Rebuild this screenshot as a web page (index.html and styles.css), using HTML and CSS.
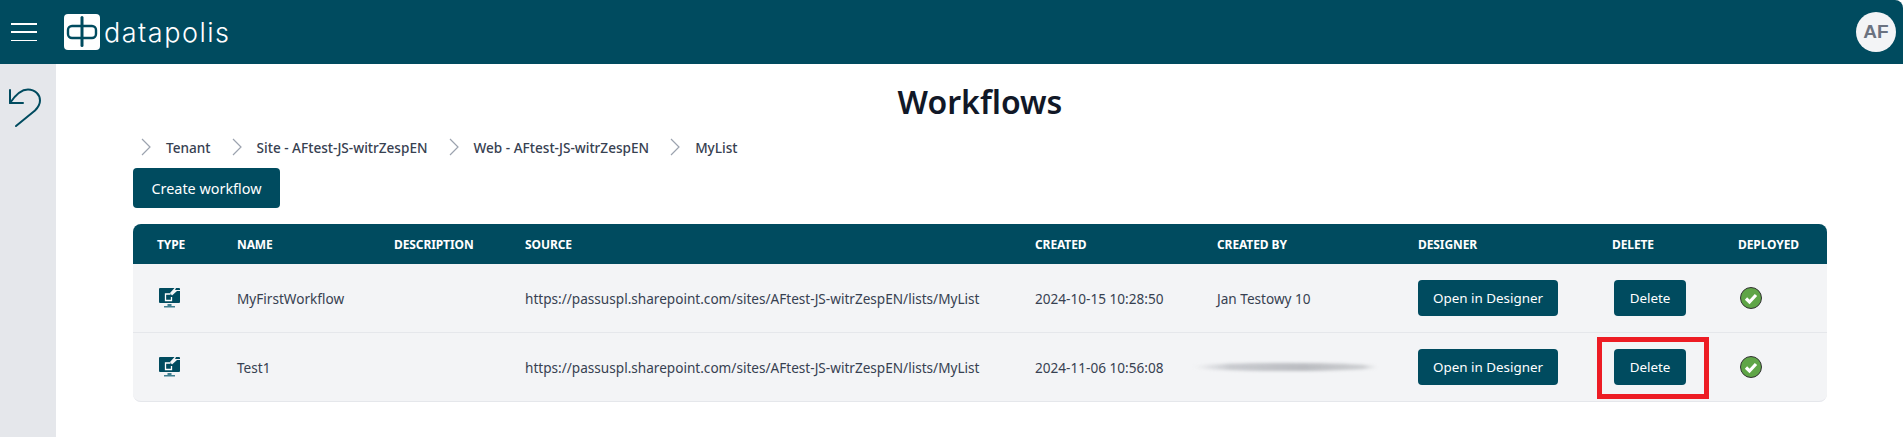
FILE: index.html
```html
<!DOCTYPE html>
<html lang="en">
<head>
    <meta charset="UTF-8">
    <title>Workflows</title>
    <link rel="stylesheet" href="styles.css">
</head>
<body>
    <header class="topbar">
        <div class="topbar-left">
            <button class="burger" aria-label="Menu"><span></span><span></span><span></span></button>
            <div class="logo">
                <svg class="logo-mark" width="36" height="36" viewBox="0 0 36 36">
                    <rect width="36" height="36" rx="4" fill="#fff"/>
                    <rect x="4" y="12" width="28" height="12" rx="4" fill="none" stroke="#004b5f" stroke-width="2.4"/>
                    <path d="M18 3.500v28" stroke="#004b5f" stroke-width="3" stroke-linecap="round"/>
                </svg>
                <span class="logo-text">datapolis</span>
            </div>
        </div>
        <div class="avatar">AF</div>
    </header>

    <div class="layout">
        <aside class="sidebar">
            <svg width="36" height="44" viewBox="0 0 36 44" fill="none" stroke="#004b5f" stroke-width="2" stroke-linecap="round" stroke-linejoin="round">
                <path d="M2 2v13h13"/>
                <path d="M2 15C8 6 13 1.500 20 1.500c7 0 12 5 12 11 0 4-2 7-5 10L8 38"/>
            </svg>
        </aside>

        <main class="content">
            <h1>Workflows</h1>

            <nav class="breadcrumb">
                <span class="crumb"><svg class="chevron" width="10" height="18" viewBox="0 0 10 18"><path d="M1 1l8 8-8 8" /></svg>Tenant</span>
                <span class="crumb"><svg class="chevron" width="10" height="18" viewBox="0 0 10 18"><path d="M1 1l8 8-8 8" /></svg>Site - AFtest-JS-witrZespEN</span>
                <span class="crumb"><svg class="chevron" width="10" height="18" viewBox="0 0 10 18"><path d="M1 1l8 8-8 8" /></svg>Web - AFtest-JS-witrZespEN</span>
                <span class="crumb"><svg class="chevron" width="10" height="18" viewBox="0 0 10 18"><path d="M1 1l8 8-8 8" /></svg>MyList</span>
            </nav>

            <button class="btn btn-create">Create workflow</button>

            <table class="workflows">
                <colgroup>
                    <col class="col-type"><col class="col-name"><col class="col-desc"><col class="col-source"><col class="col-created"><col class="col-by"><col class="col-designer"><col class="col-delete"><col class="col-deployed">
                </colgroup>
                <thead>
                    <tr>
                        <th>Type</th><th>Name</th><th>Description</th><th>Source</th><th>Created</th><th>Created by</th><th>Designer</th><th>Delete</th><th>Deployed</th>
                    </tr>
                </thead>
                <tbody>
                    <tr>
                        <td>
                            <svg class="type-icon" width="21" height="20" viewBox="0 0 21 20">
                                <path d="M1 0h14.500L11 5l2 2.500L18 3h3v11a1 1 0 0 1-1 1H1a1 1 0 0 1-1-1V1a1 1 0 0 1 1-1z" fill="#004b5f"/>
                                <path d="M17 0h3a1 1 0 0 1 1 1v1h-5z" fill="#004b5f"/>
                                <path d="M11.500 6h-5v6.500h6V9" fill="none" stroke="#fff" stroke-width="1.300"/>
                                <path d="M8.500 16h4v2h-4zM5 18h11v1.500H5z" fill="#3f7f90"/>
                            </svg>
                        </td>
                        <td>MyFirstWorkflow</td>
                        <td></td>
                        <td>https://passuspl.sharepoint.com/sites/AFtest-JS-witrZespEN/lists/MyList</td>
                        <td>2024-10-15 10:28:50</td>
                        <td>Jan Testowy 10</td>
                        <td><button class="btn btn-designer">Open in Designer</button></td>
                        <td><button class="btn btn-delete">Delete</button></td>
                        <td>
                            <svg class="ok-icon" width="22" height="22" viewBox="0 0 22 22">
                                <circle cx="11" cy="11" r="10.500" fill="#5fa547" stroke="#333" stroke-width="1"/>
                                <path d="M6 11.500l3.500 3.500L16 8" fill="none" stroke="#fff" stroke-width="3.200"/>
                            </svg>
                        </td>
                    </tr>
                    <tr>
                        <td>
                            <svg class="type-icon" width="21" height="20" viewBox="0 0 21 20">
                                <path d="M1 0h14.500L11 5l2 2.500L18 3h3v11a1 1 0 0 1-1 1H1a1 1 0 0 1-1-1V1a1 1 0 0 1 1-1z" fill="#004b5f"/>
                                <path d="M17 0h3a1 1 0 0 1 1 1v1h-5z" fill="#004b5f"/>
                                <path d="M11.500 6h-5v6.500h6V9" fill="none" stroke="#fff" stroke-width="1.300"/>
                                <path d="M8.500 16h4v2h-4zM5 18h11v1.500H5z" fill="#3f7f90"/>
                            </svg>
                        </td>
                        <td>Test1</td>
                        <td></td>
                        <td>https://passuspl.sharepoint.com/sites/AFtest-JS-witrZespEN/lists/MyList</td>
                        <td>2024-11-06 10:56:08</td>
                        <td><div class="smudge"></div></td>
                        <td><button class="btn btn-designer">Open in Designer</button></td>
                        <td>
                            <div class="highlight"><button class="btn btn-delete">Delete</button></div>
                        </td>
                        <td>
                            <svg class="ok-icon" width="22" height="22" viewBox="0 0 22 22">
                                <circle cx="11" cy="11" r="10.500" fill="#5fa547" stroke="#333" stroke-width="1"/>
                                <path d="M6 11.500l3.500 3.500L16 8" fill="none" stroke="#fff" stroke-width="3.200"/>
                            </svg>
                        </td>
                    </tr>
                </tbody>
            </table>
        </main>
    </div>
</body>
</html>
```

FILE: styles.css
```css
* {
    box-sizing: border-box;
}

html, body {
    height: 100%;
}

body {
    margin: 0;
    font-family: "Noto Sans", "Open Sans", sans-serif;
    color: #1f2937;
    background-color: white;
    overflow: hidden;
}

.topbar {
    height: 64px;
    background-color: #004b5f;
    border-top-right-radius: 8px;
    display: flex;
    align-items: center;
    justify-content: space-between;
    padding: 0 7px 0 11px;
}

.topbar-left {
    display: flex;
    align-items: center;
    gap: 27px;
}

.burger {
    width: 26px;
    height: 18px;
    padding: 0;
    border: none;
    background: none;
    display: flex;
    flex-direction: column;
    justify-content: space-between;
}

.burger span {
    display: block;
    height: 1.5px;
    background-color: white;
}

.logo {
    display: flex;
    align-items: center;
    gap: 4px;
}

.logo-mark {
    display: block;
}

.logo-text {
    color: white;
    font-family: "Inter", sans-serif;
    font-size: 27px;
    font-weight: 300;
    letter-spacing: 1.5px;
}

.avatar {
    width: 40px;
    height: 40px;
    border-radius: 50%;
    background-color: #f3f4f6;
    color: #6b7280;
    font-family: "Liberation Sans", sans-serif;
    font-size: 19px;
    font-weight: 700;
    display: flex;
    align-items: center;
    justify-content: center;
}

.layout {
    display: flex;
    height: 373px;
}

.sidebar {
    width: 56px;
    background-color: #e5e7eb;
    padding: 24px 0 0 8px;
}

.content {
    flex: 1;
    padding: 16px 76px 0 77px;
}

h1 {
    margin: 0;
    font-size: 32px;
    line-height: 44px;
    font-weight: 600;
    text-align: center;
    color: #111827;
}

.breadcrumb {
    display: flex;
    margin-top: 11px;
    height: 24px;
    align-items: center;
    padding-left: 8px;
    gap: 21px;
    font-size: 13.6px;
    font-weight: 500;
    color: #374151;
}

.crumb {
    display: flex;
    align-items: center;
    gap: 15px;
}

.chevron {
    fill: none;
    stroke: #9ca3af;
    stroke-width: 1.2;
}

.btn {
    display: block;
    background-color: #004b5f;
    color: white;
    border: none;
    border-radius: 4px;
    font-family: inherit;
    font-size: 13.4px;
    font-weight: 400;
    padding: 0;
    height: 36px;
}

.btn-create {
    width: 147px;
    height: 40px;
    margin-top: 9px;
    font-size: 14.4px;
}

.btn-designer {
    width: 140px;
}

.btn-delete {
    width: 72px;
    margin-left: 2px;
}

.workflows {
    width: 1694px;
    margin-top: 16px;
    border-collapse: separate;
    border-spacing: 0;
    table-layout: fixed;
    font-size: 13.6px;
    background-color: #f3f4f6;
    border-radius: 8px;
}

.col-type { width: 80px; }
.col-name { width: 157px; }
.col-desc { width: 131px; }
.col-source { width: 510px; }
.col-created { width: 182px; }
.col-by { width: 201px; }
.col-designer { width: 194px; }
.col-delete { width: 126px; }
.col-deployed { width: 113px; }

.workflows th {
    height: 40px;
    background-color: #004b5f;
    color: white;
    font-size: 12px;
    font-weight: 700;
    letter-spacing: -0.1px;
    text-align: left;
    text-transform: uppercase;
    padding: 0 0 0 24px;
}

.workflows th:first-child {
    border-top-left-radius: 8px;
}

.workflows th:last-child {
    border-top-right-radius: 8px;
}

.workflows td {
    height: 69px;
    padding: 0 0 0 24px;
    border-bottom: 1px solid #e5e7eb;
    color: #374151;
    white-space: nowrap;
}

.workflows tbody tr:last-child td:first-child {
    border-bottom-left-radius: 8px;
}

.workflows tbody tr:last-child td:last-child {
    border-bottom-right-radius: 8px;
}

.type-icon {
    display: block;
    margin-left: 2px;
}

.ok-icon {
    display: block;
    margin-left: 2px;
}

.smudge {
    width: 185px;
    height: 8px;
    margin-left: -24px;
    border-radius: 50%;
    background: repeating-linear-gradient(100deg, rgba(255,255,255,0.25) 0 1px, transparent 1px 3px), linear-gradient(90deg, transparent, #c4c6cb 20%, #b4b6bb 60%, #c8cacd 92%, transparent);
    filter: blur(1.5px);
}

.highlight {
    width: 112px;
    height: 62px;
    margin: 2px 0 0 -15px;
    padding: 0 0 2px 10px;
    border: 5px solid #ed1c24;
    display: flex;
    align-items: center;
}
```
